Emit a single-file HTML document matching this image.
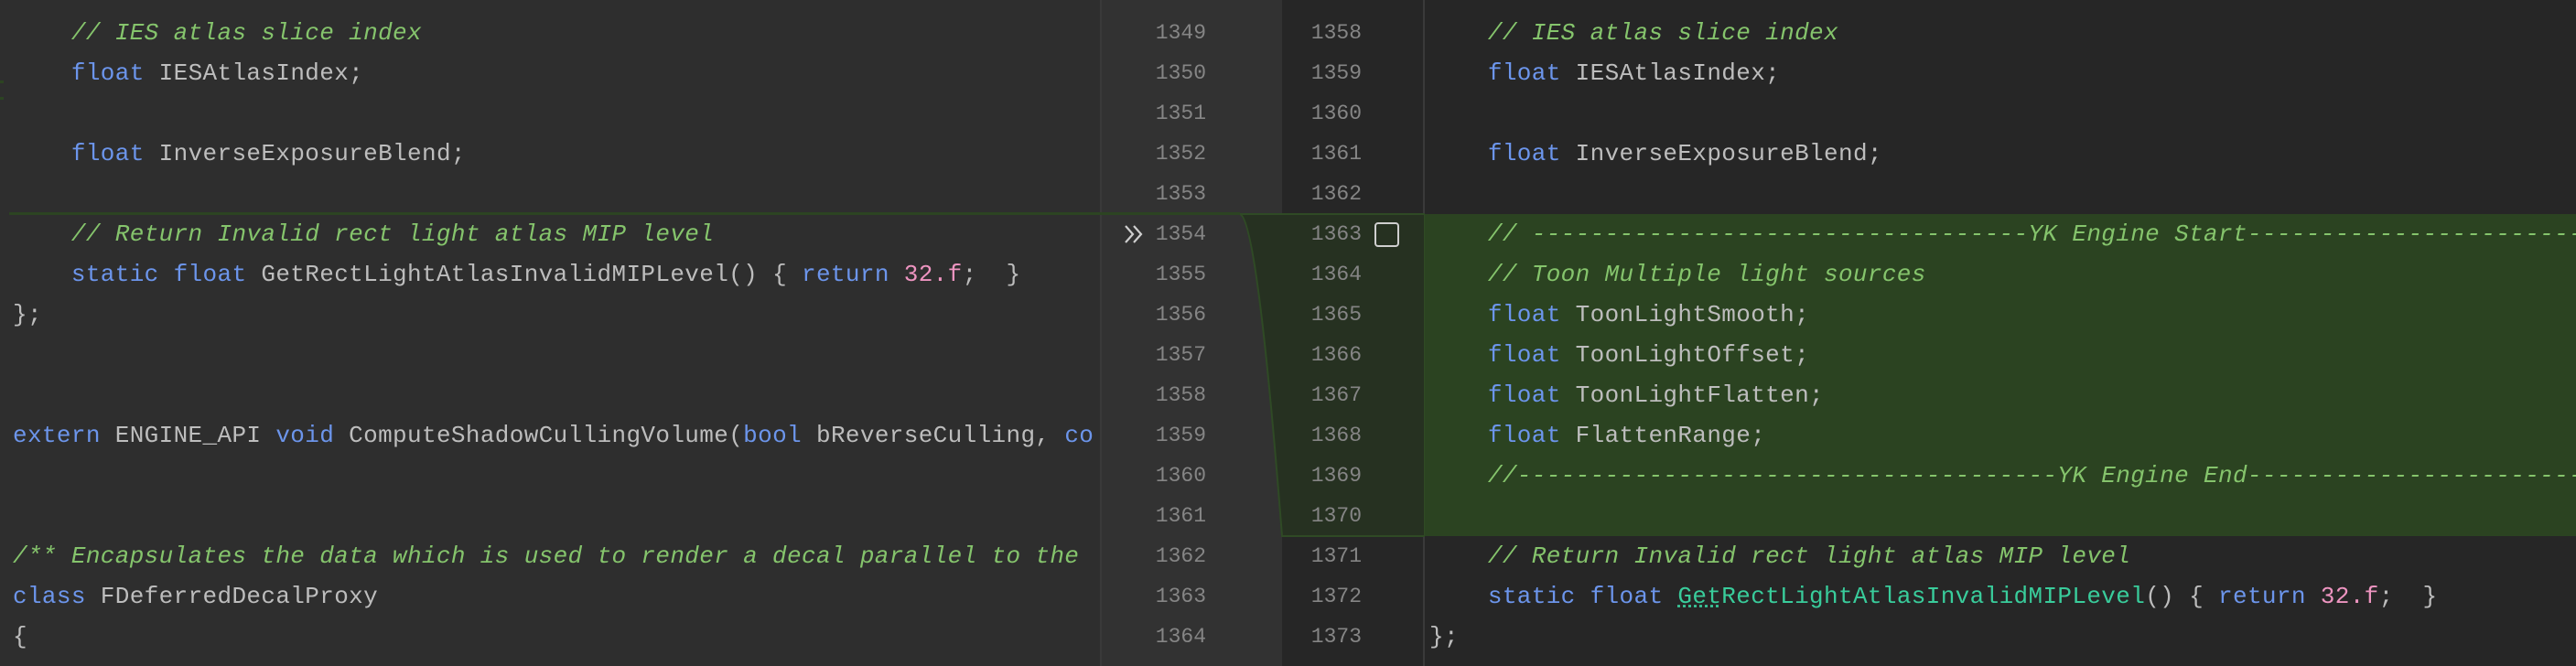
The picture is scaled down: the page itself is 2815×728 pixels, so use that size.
<!DOCTYPE html>
<html><head><meta charset="utf-8"><style>
html,body{margin:0;padding:0;width:2815px;height:728px;overflow:hidden;background:#2e2e2e;}
.a{position:absolute;}
.t{position:absolute;white-space:pre;font-family:"Liberation Mono",monospace;font-size:26px;letter-spacing:0.36px;line-height:44px;color:#bdbdbd;}
.k{color:#6c95eb}.c{color:#85c46c;font-style:italic}.f{color:#39cc9b}.n{color:#ed94c0}
.num{position:absolute;width:120px;text-align:right;font-family:"Liberation Mono",monospace;font-size:23px;line-height:44px;color:#858585;}
</style></head><body>
<div class="a" style="left:0;top:0;width:1202px;height:728px;background:#2e2e2e"></div>
<div class="a" style="left:1202px;top:0;width:199px;height:728px;background:#323232"></div>
<div class="a" style="left:1401px;top:0;width:154px;height:728px;background:#262626"></div>
<div class="a" style="left:1555px;top:0;width:1260px;height:728px;background:#262626"></div>
<div class="a" style="left:1202px;top:0;width:2px;height:728px;background:#3a3a3a"></div>
<div class="a" style="left:1555px;top:0;width:2px;height:728px;background:#3a3a3a"></div>
<div class="a" style="left:1557px;top:234px;width:1258px;height:352px;background:#2b4321"></div>
<svg class="a" style="left:1202px;top:0" width="355" height="728"><path d="M153 234 Q172 240 199 586 L355 586 L355 234 Z" fill="#263121" stroke="#2f4a25" stroke-width="2"/></svg>
<div class="a" style="left:10px;top:232px;width:1345px;height:3px;background:#2c4422"></div>
<div class="a" style="left:0;top:88px;width:4px;height:3px;background:#2c4422"></div>
<div class="a" style="left:0;top:106px;width:4px;height:3px;background:#2c4422"></div>
<svg class="a" style="left:1228px;top:245px" width="24" height="22"><path d="M2 2 L10 11 L2 20 M11 2 L19 11 L11 20" fill="none" stroke="#cfcfcf" stroke-width="2.2"/></svg>
<div class="a" style="left:1502px;top:243px;width:23px;height:23px;border:2px solid #cfcfcf;border-radius:4px"></div>

<div class="num" style="left:1198px;top:-30px">1348</div>
<div class="num" style="left:1198px;top:14px">1349</div>
<div class="num" style="left:1198px;top:58px">1350</div>
<div class="num" style="left:1198px;top:102px">1351</div>
<div class="num" style="left:1198px;top:146px">1352</div>
<div class="num" style="left:1198px;top:190px">1353</div>
<div class="num" style="left:1198px;top:234px">1354</div>
<div class="num" style="left:1198px;top:278px">1355</div>
<div class="num" style="left:1198px;top:322px">1356</div>
<div class="num" style="left:1198px;top:366px">1357</div>
<div class="num" style="left:1198px;top:410px">1358</div>
<div class="num" style="left:1198px;top:454px">1359</div>
<div class="num" style="left:1198px;top:498px">1360</div>
<div class="num" style="left:1198px;top:542px">1361</div>
<div class="num" style="left:1198px;top:586px">1362</div>
<div class="num" style="left:1198px;top:630px">1363</div>
<div class="num" style="left:1198px;top:674px">1364</div>

<div class="num" style="left:1368px;top:14px">1358</div>
<div class="num" style="left:1368px;top:58px">1359</div>
<div class="num" style="left:1368px;top:102px">1360</div>
<div class="num" style="left:1368px;top:146px">1361</div>
<div class="num" style="left:1368px;top:190px">1362</div>
<div class="num" style="left:1368px;top:234px">1363</div>
<div class="num" style="left:1368px;top:278px">1364</div>
<div class="num" style="left:1368px;top:322px">1365</div>
<div class="num" style="left:1368px;top:366px">1366</div>
<div class="num" style="left:1368px;top:410px">1367</div>
<div class="num" style="left:1368px;top:454px">1368</div>
<div class="num" style="left:1368px;top:498px">1369</div>
<div class="num" style="left:1368px;top:542px">1370</div>
<div class="num" style="left:1368px;top:586px">1371</div>
<div class="num" style="left:1368px;top:630px">1372</div>
<div class="num" style="left:1368px;top:674px">1373</div>

<div class="a" style="left:0;top:0;width:1200px;height:728px;overflow:hidden">
<div class="t" style="left:14px;top:14px">    <span class="c">// IES atlas slice index</span>
    <span class="k">float</span> IESAtlasIndex;

    <span class="k">float</span> InverseExposureBlend;

    <span class="c">// Return Invalid rect light atlas MIP level</span>
    <span class="k">static float</span> GetRectLightAtlasInvalidMIPLevel() { <span class="k">return</span> <span class="n">32.f</span>;  }
};


<span class="k">extern</span> ENGINE_API <span class="k">void</span> ComputeShadowCullingVolume(<span class="k">bool</span> bReverseCulling, <span class="k">co</span>


<span class="c">/** Encapsulates the data which is used to render a decal parallel to the</span>
<span class="k">class</span> FDeferredDecalProxy
{</div></div>

<div class="a" style="left:1557px;top:0;width:1258px;height:728px;overflow:hidden">
<div class="t" style="left:5px;top:14px">    <span class="c">// IES atlas slice index</span>
    <span class="k">float</span> IESAtlasIndex;

    <span class="k">float</span> InverseExposureBlend;

    <span class="c">// ----------------------------------YK Engine Start------------------------------------------</span>
    <span class="c">// Toon Multiple light sources</span>
    <span class="k">float</span> ToonLightSmooth;
    <span class="k">float</span> ToonLightOffset;
    <span class="k">float</span> ToonLightFlatten;
    <span class="k">float</span> FlattenRange;
    <span class="c">//-------------------------------------YK Engine End------------------------------------------</span>

    <span class="c">// Return Invalid rect light atlas MIP level</span>
    <span class="k">static float</span> <span class="f" style="text-decoration:underline dotted #39cc9b">Get</span><span class="f">RectLightAtlasInvalidMIPLevel</span>() { <span class="k">return</span> <span class="n">32.f</span>;  }
};</div></div>
</body></html>
